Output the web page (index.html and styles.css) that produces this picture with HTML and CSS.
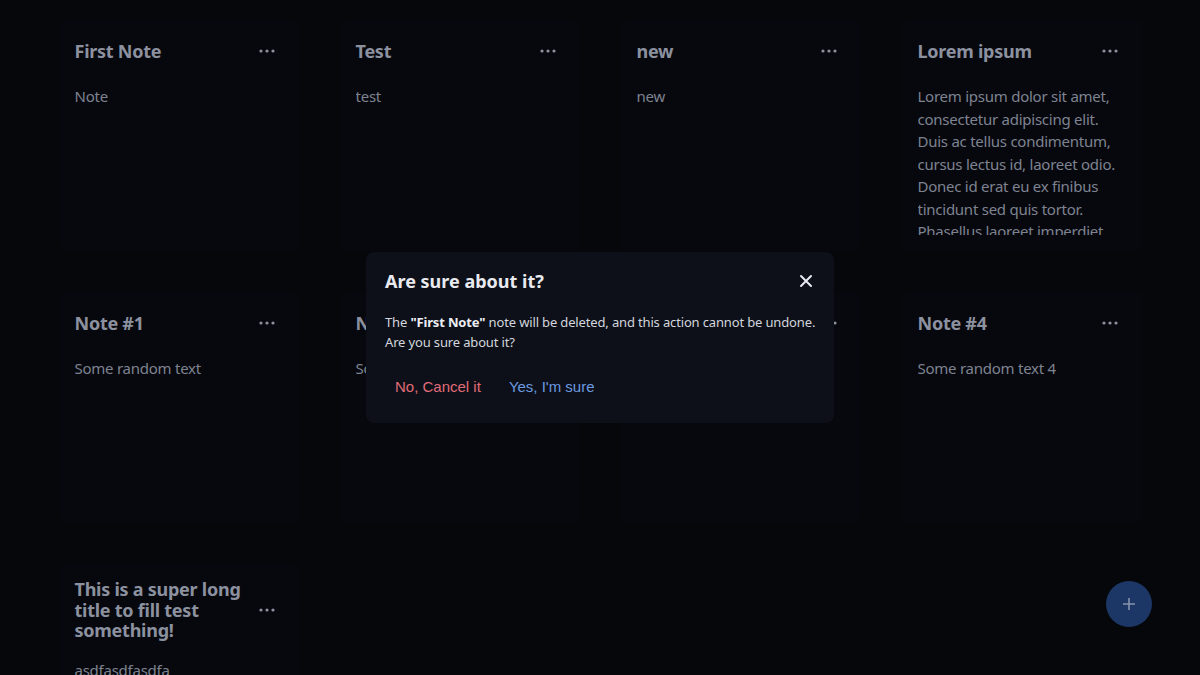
FILE: index.html
```html
<!DOCTYPE html>
<html lang="en">
<head>
<meta charset="utf-8">
<title>Notes</title>
<link rel="stylesheet" href="styles.css">
</head>
<body>
<main class="notes">
  <article class="card">
    <header class="card-head"><h2 class="card-title">First Note</h2><button class="dots"><svg width="18" height="6" viewBox="0 0 18 6"><circle cx="3" cy="3" r="1.6"/><circle cx="9" cy="3" r="1.6"/><circle cx="15" cy="3" r="1.6"/></svg></button></header>
    <div class="card-body">Note</div>
  </article>
  <article class="card">
    <header class="card-head"><h2 class="card-title">Test</h2><button class="dots"><svg width="18" height="6" viewBox="0 0 18 6"><circle cx="3" cy="3" r="1.6"/><circle cx="9" cy="3" r="1.6"/><circle cx="15" cy="3" r="1.6"/></svg></button></header>
    <div class="card-body">test</div>
  </article>
  <article class="card">
    <header class="card-head"><h2 class="card-title">new</h2><button class="dots"><svg width="18" height="6" viewBox="0 0 18 6"><circle cx="3" cy="3" r="1.6"/><circle cx="9" cy="3" r="1.6"/><circle cx="15" cy="3" r="1.6"/></svg></button></header>
    <div class="card-body">new</div>
  </article>
  <article class="card">
    <header class="card-head"><h2 class="card-title">Lorem ipsum</h2><button class="dots"><svg width="18" height="6" viewBox="0 0 18 6"><circle cx="3" cy="3" r="1.6"/><circle cx="9" cy="3" r="1.6"/><circle cx="15" cy="3" r="1.6"/></svg></button></header>
    <div class="card-body">Lorem ipsum dolor sit amet, consectetur adipiscing elit. Duis ac tellus condimentum, cursus lectus id, laoreet odio. Donec id erat eu ex finibus tincidunt sed quis tortor. Phasellus laoreet imperdiet nunc, vitae posuere magna.</div>
  </article>
  <article class="card">
    <header class="card-head"><h2 class="card-title">Note #1</h2><button class="dots"><svg width="18" height="6" viewBox="0 0 18 6"><circle cx="3" cy="3" r="1.6"/><circle cx="9" cy="3" r="1.6"/><circle cx="15" cy="3" r="1.6"/></svg></button></header>
    <div class="card-body">Some random text</div>
  </article>
  <article class="card">
    <header class="card-head"><h2 class="card-title">Note #2</h2><button class="dots"><svg width="18" height="6" viewBox="0 0 18 6"><circle cx="3" cy="3" r="1.6"/><circle cx="9" cy="3" r="1.6"/><circle cx="15" cy="3" r="1.6"/></svg></button></header>
    <div class="card-body">Some random text 2</div>
  </article>
  <article class="card">
    <header class="card-head"><h2 class="card-title">Note #3</h2><button class="dots"><svg width="18" height="6" viewBox="0 0 18 6"><circle cx="3" cy="3" r="1.6"/><circle cx="9" cy="3" r="1.6"/><circle cx="15" cy="3" r="1.6"/></svg></button></header>
    <div class="card-body">Some random text 3</div>
  </article>
  <article class="card">
    <header class="card-head"><h2 class="card-title">Note #4</h2><button class="dots"><svg width="18" height="6" viewBox="0 0 18 6"><circle cx="3" cy="3" r="1.6"/><circle cx="9" cy="3" r="1.6"/><circle cx="15" cy="3" r="1.6"/></svg></button></header>
    <div class="card-body">Some random text 4</div>
  </article>
  <article class="card">
    <header class="card-head"><h2 class="card-title">This is a super long title to fill test something!</h2><button class="dots"><svg width="18" height="6" viewBox="0 0 18 6"><circle cx="3" cy="3" r="1.6"/><circle cx="9" cy="3" r="1.6"/><circle cx="15" cy="3" r="1.6"/></svg></button></header>
    <div class="card-body">asdfasdfasdfa</div>
  </article>
</main>

<button class="fab" aria-label="Add note"><svg width="14" height="14" viewBox="0 0 14 14"><path d="M7 1v12M1 7h12" stroke="currentColor" stroke-width="1.6" fill="none"/></svg></button>

<div class="overlay">
  <section class="modal">
    <div class="modal-head">
      <h3 class="modal-title">Are sure about it?</h3>
      <button class="close" aria-label="Close"><svg width="14" height="14" viewBox="0 0 14 14"><path d="M2 2l10 10M12 2L2 12" stroke="currentColor" stroke-width="2" stroke-linecap="round" fill="none"/></svg></button>
    </div>
    <p class="modal-text">The <strong>"First Note"</strong> note will be deleted, and this action cannot be undone. Are you sure about it?</p>
    <div class="modal-actions">
      <button class="btn btn-cancel">No, Cancel it</button>
      <button class="btn btn-confirm">Yes, I'm sure</button>
    </div>
  </section>
</div>
</body>
</html>
```

FILE: styles.css
```css
* { box-sizing: border-box; }

html, body {
  margin: 0;
  height: 100%;
  overflow: hidden;
}

body {
  background: #06070b;
  font-family: "Noto Sans", "Open Sans", sans-serif;
  color: #8a8f9d;
}

.notes {
  display: grid;
  grid-template-columns: repeat(4, 240px);
  column-gap: 41px;
  row-gap: 40px;
  justify-content: center;
  padding-top: 19px;
}

.card {
  background: #07080d;
  border-radius: 6px;
  padding: 16px;
  display: flex;
  flex-direction: column;
  gap: 18px;
}

.card-head {
  display: flex;
  align-items: center;
  justify-content: space-between;
  min-height: 32px;
}

.card-title {
  margin: 0;
  font-size: 18px;
  line-height: 20.5px;
  font-weight: 700;
  color: #8c91a0;
  letter-spacing: -0.25px;
}

.dots {
  flex: none;
  width: 32px;
  height: 32px;
  border: 0;
  background: transparent;
  padding: 0;
  display: flex;
  align-items: center;
  justify-content: center;
  fill: #8c91a0;
}

.card-body {
  height: 150px;
  overflow: hidden;
  font-size: 15px;
  line-height: 22.5px;
  color: #7e8391;
  letter-spacing: -0.25px;
}

.fab {
  position: fixed;
  left: 1106px;
  top: 581px;
  width: 46px;
  height: 46px;
  border-radius: 50%;
  border: 0;
  background: #1c3766;
  color: #8593ad;
  display: flex;
  align-items: center;
  justify-content: center;
  padding: 0;
}

.overlay {
  position: fixed;
  inset: 0;
  display: flex;
  align-items: center;
  justify-content: center;
}

.modal {
  width: 468px;
  background: #0d1018;
  border-radius: 8px;
  padding: 17px 16px 18px 19px;
  color: #d5d8e0;
}

.modal-head {
  display: flex;
  align-items: center;
  justify-content: space-between;
}

.modal-title {
  margin: 0;
  font-size: 18px;
  line-height: 24px;
  font-weight: 700;
  color: #e8eaf0;
}

.close {
  border: 0;
  background: transparent;
  padding: 0;
  width: 24px;
  height: 24px;
  display: flex;
  align-items: center;
  justify-content: center;
  color: #e8eaf0;
}

.modal-text {
  margin: 19px -6px 0 0;
  font-size: 13px;
  line-height: 20px;
  letter-spacing: -0.15px;
  color: #d3d6de;
}

.modal-text strong {
  color: #eceef3;
}

.modal-actions {
  display: flex;
  gap: 8px;
  margin-top: 17px;
}

.btn {
  border: 0;
  background: transparent;
  font-family: "Liberation Sans", Arial, sans-serif;
  font-size: 15px;
  line-height: 20px;
  padding: 8px 10px;
  cursor: pointer;
}

.btn-cancel { color: #e06c78; }
.btn-confirm { color: #6b9ae0; }
```
